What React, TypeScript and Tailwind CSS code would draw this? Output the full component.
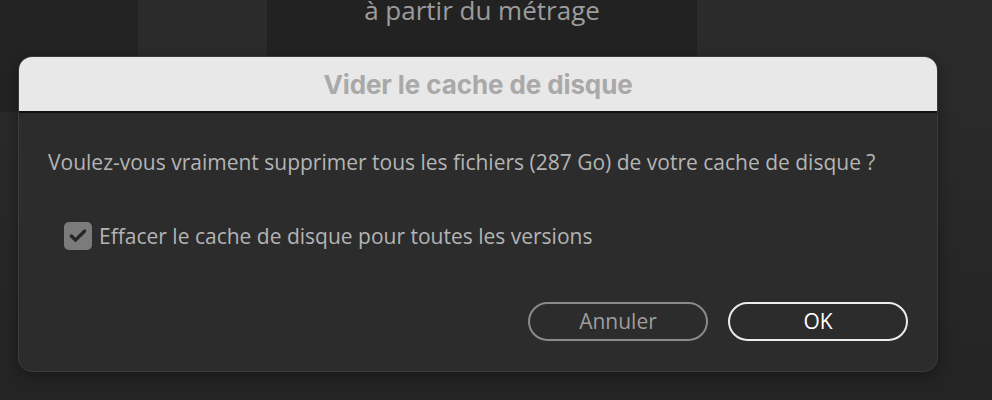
import { Check } from "lucide-react";

export default function App() {
  return (
    <div className="relative h-[400px] w-[992px] overflow-hidden bg-[#262626] font-['Open_Sans',sans-serif]">
      {/* Background panels behind the dialog */}
      <div className="flex h-[112px]">
        <div className="w-[138px] bg-[#232323]" />
        <div className="w-[129px] bg-[#2b2b2b]" />
        <div className="flex w-[430px] justify-center bg-[#222222]">
          <p className="-mt-[9px] text-[26px] text-[#9c9c9c]">à partir du métrage</p>
        </div>
        <div className="flex-1 bg-[#2b2b2b]" />
      </div>
      <div className="h-[288px] bg-gradient-to-b from-[#2a2a2a] to-[#242424]" />

      {/* Dialog */}
      <div className="absolute left-[18px] top-[56px] w-[920px] overflow-hidden rounded-[14px] border border-[#3b3b3b] bg-[#2c2c2c] shadow-[0_4px_16px_rgba(0,0,0,0.35)]">
        <div className="flex h-[56px] items-center justify-center border-b-2 border-[#111] bg-[#e8e8e8]">
          <h1 className="font-['Inter',sans-serif] text-[26px] font-bold tracking-[-0.1px] text-[#a9a9a9]">
            Vider le cache de disque
          </h1>
        </div>
        <div className="px-[29px] pt-[35px] pb-[30px]">
          <p className="text-[21px] leading-[28px] text-[#b4b4b4]">
            Voulez-vous vraiment supprimer tous les fichiers (287 Go) de votre cache de disque ?
          </p>
          <label className="mt-[46px] ml-[16px] flex items-center gap-[7px]">
            <span className="flex h-[28px] w-[28px] items-center justify-center rounded-[5px] bg-[#7b7b7b]">
              <Check className="h-[20px] w-[20px] text-[#262626]" strokeWidth={4} />
            </span>
            <span className="text-[21px] leading-[28px] text-[#b4b4b4]">
              Effacer le cache de disque pour toutes les versions
            </span>
          </label>
          <div className="mt-[52px] flex justify-end gap-[20px]">
            <button className="h-[39px] w-[180px] rounded-full border-2 border-[#8a8a8a] text-[21px] leading-none text-[#9e9e9e]">
              Annuler
            </button>
            <button className="h-[39px] w-[180px] rounded-full border-2 border-[#ececec] text-[21px] leading-none text-white">
              OK
            </button>
          </div>
        </div>
      </div>
    </div>
  );
}
